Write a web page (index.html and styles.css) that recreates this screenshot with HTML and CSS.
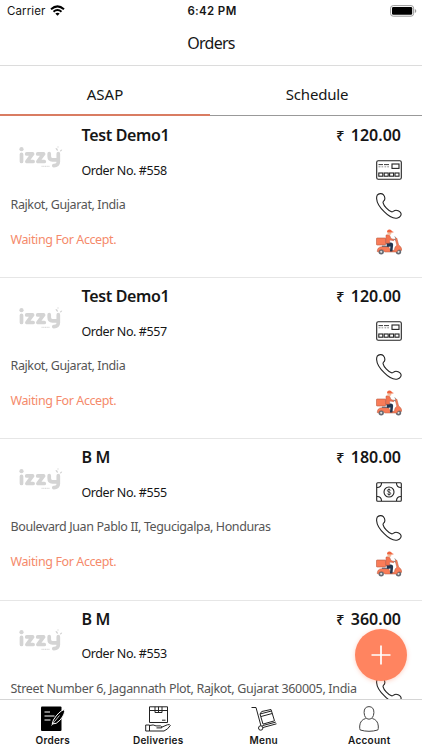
FILE: index.html
```html
<!DOCTYPE html>
<html lang="en">
<head>
<meta charset="utf-8">
<title>Orders</title>
<link rel="stylesheet" href="styles.css">
</head>
<body>
<svg class="defs" aria-hidden="true">
  <symbol id="card" viewBox="0 0 26 20">
    <g fill="none" stroke="#222" stroke-width="1.1">
      <rect x=".7" y=".7" width="24.6" height="18.6" rx="1.5"/>
      <rect x="16" y="4" width="7" height="4.4"/>
      <rect x="2.8" y="13" width="4" height="3.2"/><rect x="8.2" y="13" width="4" height="3.2"/><rect x="13.6" y="13" width="4" height="3.2"/><rect x="19" y="13" width="4" height="3.2"/>
      <path d="M2.500 4.600H7M8 4.600h5" stroke-width=".9"/>
      <path d="M2.500 6.800h2M5.500 6.800h1.700M8.500 6.800h1.700M11.200 6.800H13" stroke-width=".8" stroke="#777"/>
    </g>
  </symbol>
  <symbol id="cash" viewBox="0 0 26 20">
    <g fill="none" stroke="#222" stroke-width="1.1">
      <rect x=".7" y=".7" width="24.6" height="18.6" rx="1"/>
      <circle cx="13" cy="10" r="5"/>
      <path d="M1 5.500Q5.500 5.500 5.500 1M20.500 1q0 4.500 4.500 4.500M1 14.500q4.500 0 4.500 4.500M20.500 19q0-4.500 4.500-4.500"/>
      <path d="M14.700 8.500q-.4-1.100-1.700-1.100-1.600 0-1.600 1.200 0 1.100 1.600 1.400 1.700.3 1.700 1.500 0 1.200-1.700 1.200-1.400 0-1.700-1.200M13 6.500v7" stroke-width=".8"/>
    </g>
  </symbol>
  <symbol id="phone" viewBox="0 0 26 26">
    <path fill="#fff" stroke="#222" stroke-width="1.100" stroke-linejoin="round" d="M1.200 2.200C2.700.4 5.800 0 7.300 1.700c1.300 1.500 1.900 3.400 1.300 5-.5 1.300-1.900 1.400-1.500 3.100.8 3.100 4.600 7.500 8.400 9 1.600.5 2-.9 3.400-1.400 1.900-.6 4.800.6 5.900 2.600 1 2-.8 4.400-3.200 5-3.400.8-8.600-1.400-13.200-6.100C3.400 14.200.8 9 .6 5.500c0-1.200 0-2.400.6-3.300z"/>
  </symbol>
  <symbol id="scooter" viewBox="0 0 26 26">
    <circle cx="5.200" cy="22.800" r="2.700" fill="#666a72"/><circle cx="22.500" cy="22.800" r="2.700" fill="#666a72"/>
    <circle cx="5.200" cy="22.800" r="1.100" fill="#ddd"/><circle cx="22.500" cy="22.800" r="1.100" fill="#ddd"/>
    <rect x=".4" y="9" width="9.300" height="7" rx=".8" fill="#f97c58" stroke="#b5583f" stroke-width=".6"/>
    <path d="M1.200 22.500q.2-4.500 4.300-4.800h7.200l1.500 3.600h4.200q.2-4 2.500-5l-1.800-6.700 1.700-.5 1.800 6.800q3 1.600 3.300 5.500l-2-.6q-2.200-.4-3.200 2.200H8.700q-.8-2.800-3.500-2.600-2.500.2-2.800 2.500z" fill="#f97c58" stroke="#b5583f" stroke-width=".5"/>
    <path d="M10 13.500h4.500q3 0 2.600 3l-.7 6.100h-2.500l.5-5.200-3 .7z" fill="#23364f"/>
    <path d="M10 6q2.300-.8 3.700.3l1.300 3.200 3.200 1-.4 1.200-4-.6-.2 3.200H9.700z" fill="#f4734f" stroke="#ad523e" stroke-width=".4"/>
    <path d="M11.500 3h4q.2 3-1.600 3.300-2.100.1-2.400-1.500z" fill="#f2bc9d"/>
    <path d="M11 3.300Q10.900.5 13.400.4q2.200-.1 2.500 1.900l1.500.5v.8z" fill="#f0653f"/>
    <path d="M17.700 10.200l2.200.8M18.800 7.500l.9 1.500" stroke="#777" stroke-width=".8"/>
    <path d="M6 17.200h6" stroke="#23364f" stroke-width=".8"/>
  </symbol>
  <symbol id="izzy" viewBox="0 0 44 24">
    <g fill="none" stroke="#d4d4d4" stroke-width="3.700" stroke-linecap="round" stroke-linejoin="round">
      <path d="M2.500 8.300V15.500M7.700 7.900h5.900L7.900 15.500h6.200M18.700 7.900h5.900l-5.700 7.600h6.400M30.200 7.700v2.500q0 3.600 3.200 3.600h4M39.300 7.700v8q0 4-4.500 3.900"/>
    </g>
    <circle cx="2.500" cy="3.200" r="2.100" fill="#d4d4d4"/>
    <path d="M36.500 2q2.600-.2 2.400 2.900-2.200-.3-2.400-2.900zM43.200 3.600q-2.100-.1-2.500 1.800 2.300.3 2.500-1.800zM38.400.5h1.200v1h-1.200z" fill="#d4d4d4"/>
    <path d="M22.500 20.400h8" stroke="#ddd" stroke-width="1.200" stroke-dasharray="1.200 .5"/>
  </symbol>
</svg>

<header class="top">
  <div class="status">
    <div class="carrier"><span>Carrier</span>
      <svg width="15" height="11" viewBox="0 0 15 11"><g fill="none" stroke="#000" stroke-width="2"><path d="M1 4.200q6.500-5.600 13 0"/><path d="M3.500 6.800q4-3.500 8 0"/></g><path d="M7.500 10.800L5.300 8.600q2.200-1.800 4.400 0z"/></svg>
    </div>
    <div class="time">6:42 PM</div>
    <svg class="battery" width="27" height="12" viewBox="0 0 27 12"><rect x=".6" y=".6" width="23" height="10.600" rx="2.600" fill="#fff" stroke="#999"/><rect x="2" y="2" width="20.200" height="7.800" rx="1.300"/><path d="M24.800 4q1.500.4 1.500 2t-1.500 2z" fill="#999"/></svg>
  </div>
  <h1 class="title">Orders</h1>
</header>
<nav class="tabs"><div class="tab active"><span>ASAP</span></div><div class="tab"><span class="narrow">Schedule</span></div></nav>

<main class="list">
  <article class="order">
    <svg class="logo"><use href="#izzy"/></svg>
    <div class="name">Test Demo1</div><div class="price"><span class="rupee">₹</span> 120.00</div>
    <div class="number">Order No. #558</div><svg class="pay"><use href="#card"/></svg>
    <div class="address">Rajkot, Gujarat, India</div><svg class="call"><use href="#phone"/></svg>
    <div class="state">Waiting For Accept.</div><svg class="rider"><use href="#scooter"/></svg>
  </article>
  <article class="order">
    <svg class="logo"><use href="#izzy"/></svg>
    <div class="name">Test Demo1</div><div class="price"><span class="rupee">₹</span> 120.00</div>
    <div class="number">Order No. #557</div><svg class="pay"><use href="#card"/></svg>
    <div class="address">Rajkot, Gujarat, India</div><svg class="call"><use href="#phone"/></svg>
    <div class="state">Waiting For Accept.</div><svg class="rider"><use href="#scooter"/></svg>
  </article>
  <article class="order">
    <svg class="logo"><use href="#izzy"/></svg>
    <div class="name">B M</div><div class="price"><span class="rupee">₹</span> 180.00</div>
    <div class="number">Order No. #555</div><svg class="pay"><use href="#cash"/></svg>
    <div class="address">Boulevard Juan Pablo II, Tegucigalpa, Honduras</div><svg class="call"><use href="#phone"/></svg>
    <div class="state">Waiting For Accept.</div><svg class="rider"><use href="#scooter"/></svg>
  </article>
  <article class="order">
    <svg class="logo"><use href="#izzy"/></svg>
    <div class="name">B M</div><div class="price"><span class="rupee">₹</span> 360.00</div>
    <div class="number">Order No. #553</div>
    <div class="address long">Street Number 6, Jagannath Plot, Rajkot, Gujarat 360005, India</div><svg class="call"><use href="#phone"/></svg>
  </article>
</main>

<button class="fab" aria-label="Add"><svg width="20" height="20" viewBox="0 0 20 20"><path d="M10 .5v19M.5 10h19" stroke="#fff" stroke-width="1.700"/></svg></button>

<footer class="bar">
  <div class="item"><svg width="26" height="26" viewBox="0 0 26 26"><path d="M2 .5h18.500q1 0 1 1V24q0 1-1 1H2q-1 0-1-1V1.500q0-1 1-1z"/><path d="M4.500 6H10M4.500 10h10M4.500 14h6" stroke="#fff" stroke-width="1"/><path d="M24.500 3.500q1 4-4.300 10.500l-4 3.300-4 .7 1.200-4Q19 5 24.500 3.500z" stroke="#fff"/><path d="M11.500 19.500l3-4 5-6" fill="none" stroke="#fff" stroke-width=".8"/></svg><span>Orders</span></div>
  <div class="item"><svg width="26" height="26" viewBox="0 0 26 26" fill="none" stroke="#222" stroke-width="1"><path d="M4.500.8h18v15.700h-18zM4.500 4.500h18M10 .8v5.700h7V.8M13.500.8v5.700M17 14.200h3.500"/><path d="M.7 19h3.800v6H.7zM4.500 19.500q4-1.300 6.500.4h4.500q1.700.4 1.200 2h-5.200M16.700 21.200l5.600-2.400q2.700-.8 3 .7-2.500 4-6.300 5.500H4.500"/></svg><span>Deliveries</span></div>
  <div class="item"><svg width="26" height="26" viewBox="0 0 26 26" fill="none" stroke="#222" stroke-width="1"><path d="M.5 1.500H5l5 18.500M12 21.500l13.500-3.700M11.300 19.700l13.500-3.600"/><circle cx="9.700" cy="22" r="2.200"/><path d="M9 8l11.500-3 3 9.800-11.500 3.300zM9 8l1.700-2.500L20 3.500l.5 1.500M10 10.500l11.200-3"/></svg><span>Menu</span></div>
  <div class="item"><svg width="26" height="26" viewBox="0 0 26 26" fill="none" stroke="#444" stroke-width="1"><path d="M13 .6q5 .2 4.900 6-.4 6.400-4.900 6.600-4.500-.2-4.900-6.600Q8 .8 13 .6z"/><path d="M9.700 12.500q-5.500 1.400-6 7.500-.2 3 .5 4 4.500 1.300 8.800 1.300t8.800-1.300q.7-1 .5-4-.5-6.100-6-7.500"/></svg><span>Account</span></div>
</footer>
</body>
</html>
```
FILE: styles.css
```css
* { box-sizing: border-box; }
body { margin: 0; width: 422px; height: 750px; overflow: hidden; background: #fff; color: #161616; font-family: "Noto Sans", "Open Sans", sans-serif; display: flex; flex-direction: column; position: relative; }
.defs { position: absolute; width: 0; height: 0; }
.top { height: 66px; flex: none; border-bottom: 1px solid #dcdcdc; }
.status { height: 22px; padding: 0 5px 1px 7px; display: grid; grid-template-columns: 1fr auto 1fr; align-items: center; font-family: Inter, sans-serif; font-size: 11.500px; }
.carrier { display: flex; align-items: center; gap: 5px; letter-spacing: .1px; }
.time { font-weight: 600; letter-spacing: .35px; }
.battery { justify-self: end; }
.title { margin: 10px 0 0; font-size: 16px; line-height: 23px; font-weight: 400; text-align: center; letter-spacing: -.75px; }
.tabs { height: 51px; flex: none; display: flex; font-size: 15px; }
.tab { flex: 1; height: 50px; display: flex; align-items: center; justify-content: center; padding-top: 7px; border-bottom: 1px solid #999; }
.tab.active { flex: 0 0 210px; border-bottom: 2px solid #d97c62; }
.narrow { letter-spacing: -.2px; padding-left: 2px; }
.list { flex: 1; overflow: hidden; }
.order { height: 161.200px; padding: 0 21px 0 10.500px; border-bottom: 1px solid #e6e6e6; display: grid; grid-template-columns: 71px 1fr auto; grid-template-rows: 36px 34px 35px 35px; align-items: center; align-content: start; }
.logo { grid-column: 1; grid-row: 1 / 3; width: 44px; height: 24px; margin: 11px 0 0 8px; }
.name { grid-column: 2; grid-row: 1; font-size: 16px; font-weight: 600; letter-spacing: -.35px; }
.price { grid-column: 3; grid-row: 1; font-size: 16px; font-weight: 600; }
.rupee { font-size: 15px; font-weight: 500; margin-right: 2px; }
.number { grid-column: 2; grid-row: 2; font-size: 12.500px; letter-spacing: -.42px; }
.address, .state { grid-column: 1 / 3; font-size: 12.500px; color: #555; white-space: nowrap; letter-spacing: -.39px; }
.address { grid-row: 3; }
.address.long { letter-spacing: -.32px; }
.state { grid-row: 4; color: #f58a6b; }
.pay, .call, .rider { grid-column: 3; justify-self: end; width: 26px; height: 26px; margin-right: -1px; }
.pay { grid-row: 2; height: 20px; }
.call { grid-row: 3; margin-top: 3px; }
.rider { grid-row: 4; margin-top: 4px; }
.fab { position: absolute; left: 355px; top: 629px; width: 52px; height: 52px; padding: 0; border: 0; border-radius: 50%; background: #ff8460; display: flex; align-items: center; justify-content: center; box-shadow: 0 1px 4px rgba(255, 120, 80, .35); }
.bar { height: 51px; flex: none; border-top: 1px solid #d5d5d5; background: #fff; display: flex; }
.item { flex: 1; display: flex; flex-direction: column; align-items: center; padding-top: 6px; font-family: Inter, sans-serif; font-size: 10px; line-height: 14px; font-weight: 600; letter-spacing: .25px; gap: 1px; }
```
